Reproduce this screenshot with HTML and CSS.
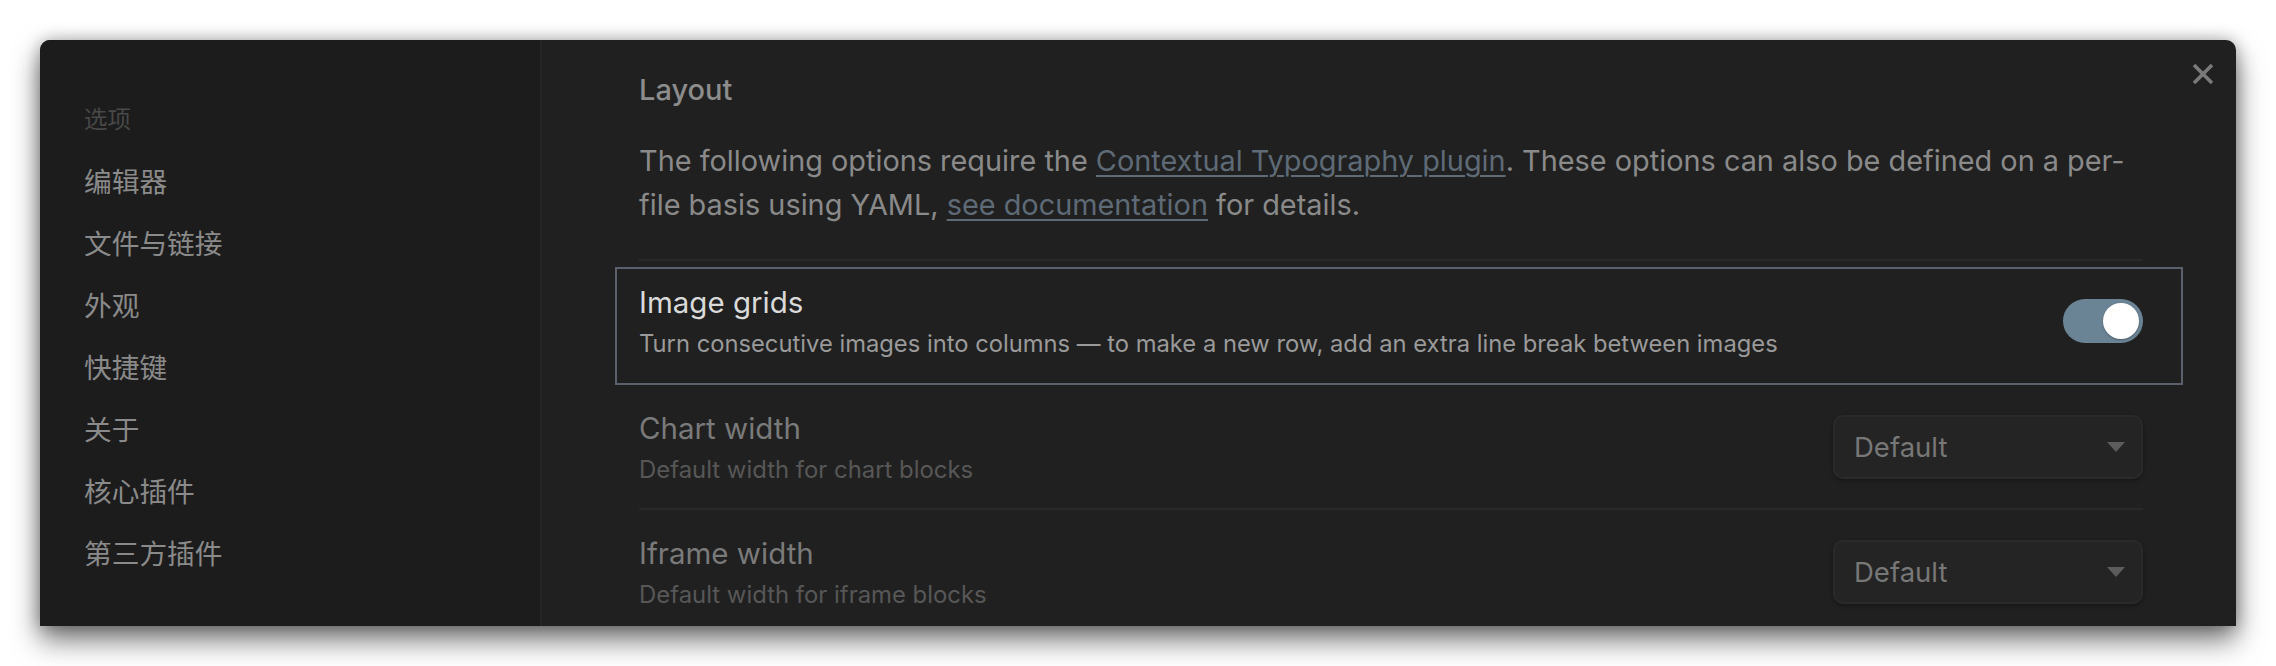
FILE: index.html
```html
<!DOCTYPE html>
<html lang="zh">
<head>
<meta charset="utf-8">
<title>Settings</title>
<link rel="stylesheet" href="styles.css">
</head>
<body>
<div class="window">
  <nav class="sidebar">
    <div class="nav-header">选项</div>
    <div class="nav-item">编辑器</div>
    <div class="nav-item">文件与链接</div>
    <div class="nav-item">外观</div>
    <div class="nav-item">快捷键</div>
    <div class="nav-item">关于</div>
    <div class="nav-item">核心插件</div>
    <div class="nav-item">第三方插件</div>
  </nav>
  <main class="content">
    <h2 class="heading">Layout</h2>
    <p class="intro">The following options require the <a href="#">Contextual Typography plugin</a>. These options can also be defined on a per-<br>file basis using YAML, <a href="#">see documentation</a> for details.</p>
    <div class="highlight">
      <div class="setting">
        <div class="info">
          <div class="name">Image grids</div>
          <div class="desc">Turn consecutive images into columns — to make a new row, add an extra line break between images</div>
        </div>
        <div class="toggle"><span class="knob"></span></div>
      </div>
    </div>
    <div class="setting row">
      <div class="info">
        <div class="name">Chart width</div>
        <div class="desc">Default width for chart blocks</div>
      </div>
      <div class="dropdown"><span>Default</span><span class="caret"></span></div>
    </div>
    <div class="setting row">
      <div class="info">
        <div class="name">Iframe width</div>
        <div class="desc">Default width for iframe blocks</div>
      </div>
      <div class="dropdown"><span>Default</span><span class="caret"></span></div>
    </div>
  </main>
  <button class="close" aria-label="Close">
    <svg width="22" height="22" viewBox="0 0 22 22"><path d="M2 2 L20 20 M20 2 L2 20" stroke="#7a7a7a" stroke-width="3.6" stroke-linecap="butt" fill="none"/></svg>
  </button>
</div>
</body>
</html>
```
FILE: styles.css
```css
* { box-sizing: border-box; }
html, body { margin: 0; }
body {
  background: #ffffff;
  height: 666px;
  overflow: hidden;
  font-family: Inter, "Noto Sans CJK SC", sans-serif;
}
.window {
  position: relative;
  margin: 40px 0 0 40px;
  width: 2196px;
  height: 586px;
  display: flex;
  background: #202020;
  border-radius: 10px 10px 0 0;
  overflow: hidden;
  box-shadow: 0 14px 28px rgba(0,0,0,0.55), 0 0 16px rgba(0,0,0,0.28);
}
.sidebar {
  width: 502px;
  flex: none;
  background: #1c1c1c;
  border-right: 2px solid #252525;
  padding: 63px 0 0 44px;
}
.nav-header {
  font-size: 23.5px;
  line-height: 34px;
  color: #484848;
  margin-bottom: 14px;
}
.nav-item {
  font-size: 27.7px;
  line-height: 40px;
  padding: 11px 0;
  color: #8a8a8a;
}
.content {
  flex: 1;
  min-width: 0;
  padding: 30px 93px 0 97px;
}
.heading {
  margin: 0;
  font-size: 29px;
  line-height: 40px;
  font-weight: 500;
  color: #8c8c8c;
}
.intro {
  margin: 29px 0 0;
  padding-bottom: 31px;
  font-size: 28.86px;
  line-height: 44.3px;
  color: #8a8a8a;
  border-bottom: 2px solid #292929;
}
.intro a {
  color: #5e6a76;
  text-decoration: underline;
  text-decoration-thickness: 2px;
  text-underline-offset: 4px;
}
.highlight {
  margin: 6px -40px 0 -24px;
  padding: 0 38px 0 22px;
  border: 2px solid #5a616d;
}
.setting {
  display: flex;
  align-items: center;
  justify-content: space-between;
}
.highlight .setting {
  padding: 13px 0 17px;
}
.row {
  padding: 23px 0 16px;
  border-bottom: 2px solid #292929;
}
.name {
  font-size: 29.5px;
  line-height: 40px;
  color: #dadada;
}
.desc {
  font-size: 23.75px;
  line-height: 44px;
  color: #9a9a9a;
}
.row .name { color: #7a7a7a; }
.row .desc { color: #575757; font-size: 23.9px; }
.toggle {
  flex: none;
  width: 80px;
  height: 44px;
  border-radius: 22px;
  background: #6b8495;
  display: flex;
  justify-content: flex-end;
  align-items: center;
  padding: 4px;
  margin-bottom: 5px;
}
.knob {
  width: 36px;
  height: 36px;
  border-radius: 50%;
  background: #ffffff;
  box-shadow: 0 1px 2px rgba(0,0,0,0.3);
}
.dropdown {
  flex: none;
  width: 310px;
  height: 64px;
  margin-bottom: 5px;
  display: flex;
  align-items: center;
  justify-content: space-between;
  padding: 0 16px 0 19px;
  background: #242424;
  border: 2px solid #2a2a2a;
  border-radius: 10px;
  box-shadow: 0 2px 4px rgba(0,0,0,0.3);
  color: #777777;
  font-size: 27.5px;
}
.caret {
  width: 0;
  height: 0;
  border-left: 9px solid transparent;
  border-right: 9px solid transparent;
  border-top: 10px solid #5c5c5c;
}
.close {
  position: absolute;
  top: 23px;
  right: 22px;
  width: 22px;
  height: 22px;
  padding: 0;
  border: 0;
  background: none;
  display: block;
}
.close svg { display: block; }
```
